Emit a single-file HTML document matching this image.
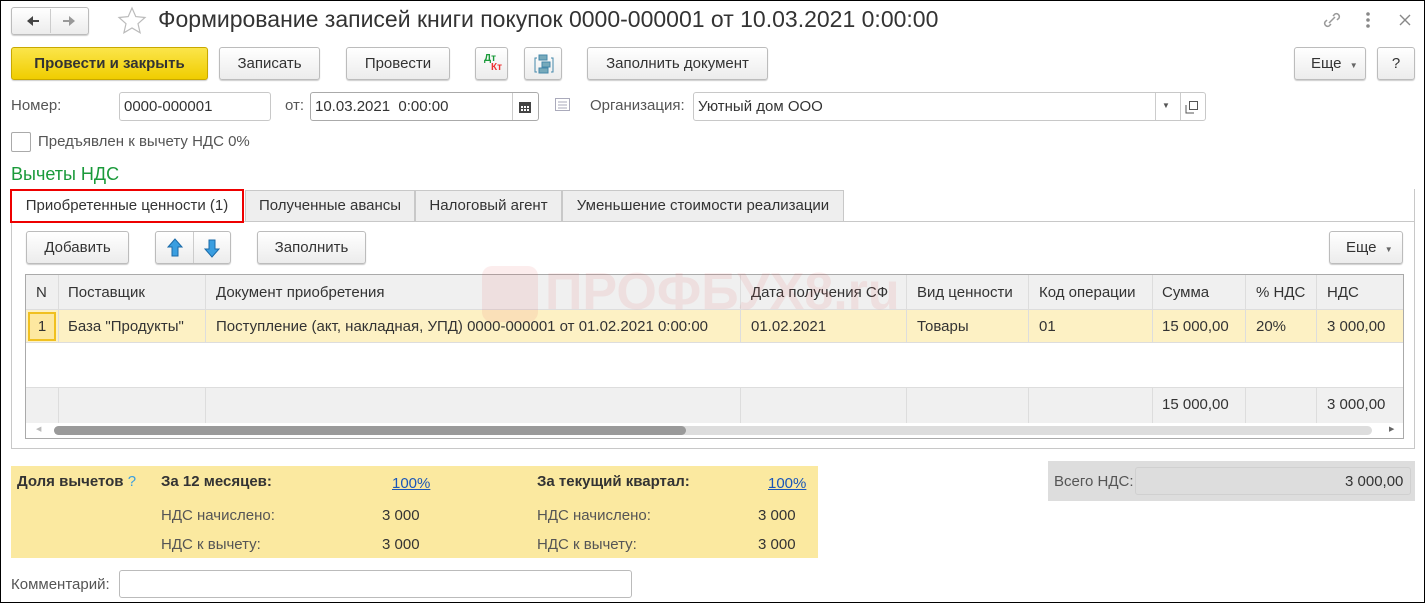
<!DOCTYPE html>
<html><head><meta charset="utf-8"><style>
*{box-sizing:border-box;margin:0;padding:0}
body{width:1425px;height:603px;overflow:hidden;background:#fff;font-family:"Liberation Sans",Arial,sans-serif;font-size:15px;color:#333;position:relative}
.frame{position:absolute;left:0;top:0;width:1425px;height:603px;border:1px solid #000;pointer-events:none}
.a{position:absolute;white-space:nowrap}
.btn{position:absolute;border:1px solid #bcbcbc;border-radius:3px;background:linear-gradient(#fff,#ececec);box-shadow:0 1px 1px rgba(0,0,0,.2);text-align:center;color:#333;font-size:15px}
.inp{position:absolute;border:1px solid #c8c8c8;border-radius:3px;background:#fff}
.c{position:absolute;top:0;bottom:0;border-left:1px solid #ddd}
.t{position:absolute;white-space:nowrap;font-size:15px;color:#333}
</style></head><body>
<div class="btn" style="left:11px;top:7px;width:78px;height:28px"></div>
<div class="a" style="left:50px;top:9px;height:24px;border-left:1px solid #ccc"></div>
<svg class="a" style="left:20px;top:12px" width="62" height="18"><path d="M8 9h11" stroke="#444" stroke-width="2"/><path d="M7 9l6-5v10z" fill="#444"/><path d="M54 9H43" stroke="#999" stroke-width="2"/><path d="M55 9l-6-5v10z" fill="#999"/></svg>
<svg class="a" style="left:117px;top:6px" width="30" height="30"><path d="M15 2l3.8 8.6 9.2.9-7 6.2 2.1 9.1L15 22l-8.1 4.8L9 17.7 2 11.5l9.2-.9z" fill="none" stroke="#bbb" stroke-width="1.2"/></svg>
<div class="a" style="left:158px;top:6px;font-size:23px;color:#333">Формирование записей книги покупок 0000-000001 от 10.03.2021 0:00:00</div>
<svg class="a" style="left:1320px;top:9px" width="24" height="22"><path d="M9 14l6-6M7 11l-2 2a3 3 0 004 4l2-2M17 11l2-2a3 3 0 00-4-4l-2 2" stroke="#999" stroke-width="1.5" fill="none"/></svg>
<svg class="a" style="left:1364px;top:10px" width="8" height="20"><circle cx="4" cy="4" r="1.8" fill="#888"/><circle cx="4" cy="10" r="1.8" fill="#888"/><circle cx="4" cy="16" r="1.8" fill="#888"/></svg>
<svg class="a" style="left:1398px;top:13px" width="14" height="14"><path d="M2 2l10 10M12 2L2 12" stroke="#888" stroke-width="1.4"/></svg>
<div class="btn" style="left:11px;top:47px;width:197px;height:33px;background:linear-gradient(#fbe54a,#f0cd00);border-color:#c8a800;font-weight:bold;line-height:31px">Провести и закрыть</div>
<div class="btn" style="left:219px;top:47px;width:101px;height:33px;line-height:31px">Записать</div>
<div class="btn" style="left:346px;top:47px;width:104px;height:33px;line-height:31px">Провести</div>
<div class="btn" style="left:475px;top:47px;width:33px;height:33px"><span class="a" style="left:8px;top:5px;font-size:10px;color:#1a9a3a;font-weight:bold">Дт</span><span class="a" style="left:15px;top:14px;font-size:10px;color:#e33;font-weight:bold">Кт</span></div>
<div class="btn" style="left:524px;top:47px;width:38px;height:33px"><svg class="a" style="left:9px;top:6px" width="20" height="20"><rect x="5" y="1" width="8" height="5" fill="#7ab" stroke="#48a"/><rect x="8" y="8" width="8" height="5" fill="#7ab" stroke="#48a"/><rect x="5" y="14" width="9" height="5" fill="#7ab" stroke="#48a"/><path d="M3 4H1v14h2M17 4h2v14h-2" stroke="#48a" fill="none"/></svg></div>
<div class="btn" style="left:587px;top:47px;width:181px;height:33px;line-height:31px">Заполнить документ</div>
<div class="btn" style="left:1294px;top:47px;width:72px;height:33px;line-height:31px;text-align:left;padding-left:16px">Еще <span style="font-size:8px;color:#666;margin-left:4px">▼</span></div>
<div class="btn" style="left:1377px;top:47px;width:38px;height:33px;line-height:31px">?</div>
<div class="t" style="left:11px;top:97px;color:#555">Номер:</div>
<div class="inp" style="left:119px;top:92px;width:152px;height:29px"><span class="t" style="left:4px;top:5px">0000-000001</span></div>
<div class="t" style="left:285px;top:97px;color:#555">от:</div>
<div class="inp" style="left:310px;top:92px;width:229px;height:29px;border-color:#aaa"><span class="t" style="left:4px;top:5px">10.03.2021&nbsp; 0:00:00</span><div class="a" style="left:201px;top:0;bottom:0;border-left:1px solid #ccc"></div><svg class="a" style="left:207px;top:7px" width="14" height="14"><rect x="1" y="2" width="12" height="11" fill="#444"/><rect x="3" y="6" width="8" height="5" fill="#fff"/><path d="M3 8.5h8M5.5 6v5M8.5 6v5" stroke="#444"/></svg></div>
<svg class="a" style="left:555px;top:98px" width="16" height="14"><rect x="0.5" y="0.5" width="14" height="12" fill="none" stroke="#aab"/><path d="M3 4h9M3 7h9M3 10h9" stroke="#aab"/></svg>
<div class="t" style="left:590px;top:97px;color:#555">Организация:</div>
<div class="inp" style="left:693px;top:92px;width:513px;height:29px"><span class="t" style="left:4px;top:5px">Уютный дом ООО</span><div class="a" style="left:461px;top:0;bottom:0;border-left:1px solid #ccc"></div><span class="a" style="left:468px;top:8px;font-size:8px;color:#555">▼</span><div class="a" style="left:486px;top:0;bottom:0;border-left:1px solid #ccc"></div><svg class="a" style="left:491px;top:7px" width="14" height="14"><path d="M1 5v8h8" fill="none" stroke="#555"/><rect x="4.5" y="1.5" width="8" height="8" fill="none" stroke="#555"/></svg></div>
<div class="inp" style="left:11px;top:132px;width:20px;height:20px;border-color:#aaa;border-radius:2px"></div>
<div class="t" style="left:38px;top:133px;color:#555">Предъявлен к вычету НДС 0%</div>
<div class="a" style="left:11px;top:164px;font-size:18px;color:#1a9a3a">Вычеты НДС</div>
<div class="a" style="left:11px;top:189px;width:1404px;height:260px;border:1px solid #c8c8c8;border-top:none"></div>
<div class="a" style="left:11px;top:221px;width:1404px;border-top:1px solid #c8c8c8"></div>
<div class="a" style="left:245px;top:190px;width:170px;height:32px;background:#eee;border:1px solid #c8c8c8;line-height:30px;text-align:center">Полученные авансы</div>
<div class="a" style="left:415px;top:190px;width:147px;height:32px;background:#eee;border:1px solid #c8c8c8;line-height:30px;text-align:center">Налоговый агент</div>
<div class="a" style="left:562px;top:190px;width:282px;height:32px;background:#eee;border:1px solid #c8c8c8;line-height:30px;text-align:center">Уменьшение стоимости реализации</div>
<div class="a" style="left:10px;top:189px;width:234px;height:34px;background:#fff;border:2px solid #e00;line-height:30px;text-align:center">Приобретенные ценности (1)</div>
<div class="btn" style="left:26px;top:231px;width:103px;height:33px;line-height:31px">Добавить</div>
<div class="btn" style="left:155px;top:231px;width:76px;height:33px"><div class="a" style="left:37px;top:0;bottom:0;border-left:1px solid #ccc"></div>
<svg class="a" style="left:10px;top:6px" width="18" height="20"><path d="M9 1L2 9h4v9h6V9h4z" fill="#3a9ee0" stroke="#1a6aa8"/></svg>
<svg class="a" style="left:47px;top:6px" width="18" height="20"><path d="M9 19L2 11h4V2h6v9h4z" fill="#3a9ee0" stroke="#1a6aa8"/></svg></div>
<div class="btn" style="left:257px;top:231px;width:109px;height:33px;line-height:31px">Заполнить</div>
<div class="btn" style="left:1329px;top:231px;width:74px;height:33px;line-height:31px;text-align:left;padding-left:16px">Еще <span style="font-size:8px;color:#666;margin-left:4px">▼</span></div>
<div class="a" style="left:25px;top:274px;width:1379px;height:165px;border:1px solid #aaa;background:#fff;overflow:hidden">
 <div class="a" style="left:0;top:0;width:1379px;height:35px;background:#f0f0f0;border-bottom:1px solid #ddd"></div>
 <div class="a" style="left:0;top:35px;width:1379px;height:33px;background:#fdf1c4;border-bottom:1px solid #ddd"></div>
 <div class="a" style="left:0;top:112px;width:1379px;height:36px;background:#f0f0f0;border-top:1px solid #ddd"></div>
 <div class="a" style="left:0;top:0;width:1379px;height:148px">
  <div class="c" style="left:32px"></div><div class="c" style="left:179px"></div><div class="c" style="left:714px"></div><div class="c" style="left:880px"></div><div class="c" style="left:1002px"></div><div class="c" style="left:1126px"></div><div class="c" style="left:1219px"></div><div class="c" style="left:1290px"></div>
 </div>
 <div class="a" style="left:0;top:68px;width:1379px;height:44px;background:#fff"></div>
 <div class="a" style="left:2px;top:37px;width:28px;height:29px;border:2px solid #f0c020;background:#fde8a0;text-align:center;line-height:25px">1</div>
 <span class="t" style="left:10px;top:9px">N</span><span class="t" style="left:42px;top:9px">Поставщик</span><span class="t" style="left:190px;top:9px">Документ приобретения</span><span class="t" style="left:725px;top:9px">Дата получения СФ</span><span class="t" style="left:891px;top:9px">Вид ценности</span><span class="t" style="left:1013px;top:9px">Код операции</span><span class="t" style="left:1136px;top:9px">Сумма</span><span class="t" style="left:1230px;top:9px">% НДС</span><span class="t" style="left:1301px;top:9px">НДС</span>
 <span class="t" style="left:42px;top:43px">База "Продукты"</span><span class="t" style="left:190px;top:43px">Поступление (акт, накладная, УПД) 0000-000001 от 01.02.2021 0:00:00</span><span class="t" style="left:725px;top:43px">01.02.2021</span><span class="t" style="left:891px;top:43px">Товары</span><span class="t" style="left:1013px;top:43px">01</span><span class="t" style="left:1136px;top:43px">15 000,00</span><span class="t" style="left:1230px;top:43px">20%</span><span class="t" style="left:1301px;top:43px">3 000,00</span>
 <span class="t" style="left:1136px;top:121px">15 000,00</span><span class="t" style="left:1301px;top:121px">3 000,00</span>
 <div class="a" style="left:0;top:148px;width:1379px;height:17px;background:#fff"></div>
 <div class="a" style="left:28px;top:151px;width:1318px;height:9px;border-radius:5px;background:#ddd"></div>
 <div class="a" style="left:28px;top:151px;width:632px;height:9px;border-radius:5px;background:#9a9a9a"></div>
 <span class="a" style="left:10px;top:150px;font-size:7px;color:#bbb">◀</span><span class="a" style="left:1363px;top:150px;font-size:7px;color:#666">▶</span>
</div>
<div class="a" style="left:482px;top:266px;width:56px;height:56px;border-radius:10px;background:rgba(230,80,80,.1)"></div>
<div class="a" style="left:545px;top:262px;font-size:52px;font-weight:bold;color:rgba(230,80,80,.1)">ПРОФБУХ8.ru</div>
<div class="a" style="left:11px;top:466px;width:807px;height:92px;background:#fbe9a0"></div>
<div class="t" style="left:17px;top:473px;font-weight:bold">Доля вычетов <span style="color:#3a9ee0;font-weight:normal">?</span></div>
<div class="t" style="left:161px;top:473px;font-weight:bold">За 12 месяцев:</div>
<div class="t" style="left:392px;top:475px;color:#1a56b8;text-decoration:underline">100%</div>
<div class="t" style="left:537px;top:473px;font-weight:bold">За текущий квартал:</div>
<div class="t" style="left:768px;top:475px;color:#1a56b8;text-decoration:underline">100%</div>
<div class="t" style="left:161px;top:507px;color:#555">НДС начислено:</div><div class="t" style="left:382px;top:507px">3 000</div>
<div class="t" style="left:537px;top:507px;color:#555">НДС начислено:</div><div class="t" style="left:758px;top:507px">3 000</div>
<div class="t" style="left:161px;top:536px;color:#555">НДС к вычету:</div><div class="t" style="left:382px;top:536px">3 000</div>
<div class="t" style="left:537px;top:536px;color:#555">НДС к вычету:</div><div class="t" style="left:758px;top:536px">3 000</div>
<div class="a" style="left:1048px;top:461px;width:367px;height:40px;background:#ddd"></div>
<div class="a" style="left:1135px;top:467px;width:276px;height:28px;border:1px solid #d0d0d0;border-radius:3px"></div>
<div class="t" style="left:1054px;top:473px;color:#555">Всего НДС:</div>
<div class="t" style="left:1345px;top:473px">3 000,00</div>
<div class="t" style="left:11px;top:576px;color:#555">Комментарий:</div>
<div class="inp" style="left:119px;top:570px;width:513px;height:28px;border-color:#bbb"></div>
<div class="frame"></div>
</body></html>
